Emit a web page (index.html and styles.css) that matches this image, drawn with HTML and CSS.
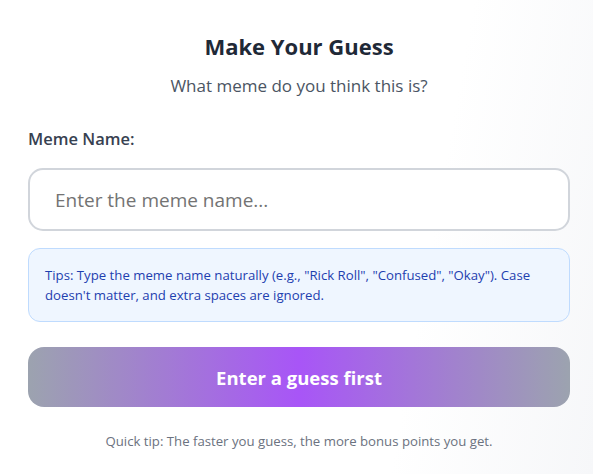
FILE: index.html
```html
<!DOCTYPE html>
<html lang="en">
<head>
<meta charset="utf-8">
<title>Make Your Guess</title>
<link rel="stylesheet" href="styles.css">
</head>
<body>
<main class="guess-card">
  <h1 class="title">Make Your Guess</h1>
  <p class="subtitle">What meme do you think this is?</p>
  <label class="field-label" for="meme">Meme Name:</label>
  <input id="meme" class="meme-input" type="text" placeholder="Enter the meme name...">
  <div class="tips">Tips: Type the meme name naturally (e.g., "Rick Roll", "Confused", "Okay"). Case doesn't matter, and extra spaces are ignored.</div>
  <button class="submit" type="button">Enter a guess first</button>
  <p class="quick-tip">Quick tip: The faster you guess, the more bonus points you get.</p>
</main>
</body>
</html>
```

FILE: styles.css
```css
* { box-sizing: border-box; }
html, body { height: 100%; }
body {
  margin: 0;
  font-family: "Open Sans", "Noto Sans", sans-serif;
  background: linear-gradient(100deg, #ffffff 70%, #f6f7f9 100%);
}
.guess-card {
  display: flex;
  flex-direction: column;
  padding: 32px 23px 0 28px;
}
.title {
  margin: 0;
  text-align: center;
  font-size: 22px;
  line-height: 28px;
  font-weight: 700;
  color: #1f2937;
}
.subtitle {
  margin: 14px 0 0;
  text-align: center;
  font-size: 17px;
  line-height: 24px;
  color: #4b5563;
}
.field-label {
  margin-top: 30px;
  font-size: 16.5px;
  line-height: 22px;
  font-weight: 600;
  color: #374151;
}
.meme-input {
  margin-top: 18px;
  height: 63px;
  border: 2px solid #d1d5db;
  border-radius: 15px;
  padding: 0 25px;
  font-family: inherit;
  font-size: 19px;
  color: #1f2937;
  background: #fff;
  outline: none;
}
.meme-input::placeholder { color: #737373; }
.tips {
  margin-top: 17px;
  border: 1px solid #bfdbfe;
  border-radius: 12px;
  background: #eff6ff;
  padding: 16px 16px;
  font-size: 13.2px;
  line-height: 20px;
  color: #1e40af;
}
.submit {
  margin-top: 25px;
  height: 60px;
  border: none;
  border-radius: 16px;
  background: linear-gradient(90deg, #9ca3af 0%, #a855f7 50%, #9ca3af 100%);
  color: #fff;
  font-family: inherit;
  font-size: 18.5px;
  font-weight: 700;
}
.quick-tip {
  margin: 24px 0 0;
  text-align: center;
  font-size: 13.2px;
  line-height: 20px;
  color: #6b7280;
}
```
